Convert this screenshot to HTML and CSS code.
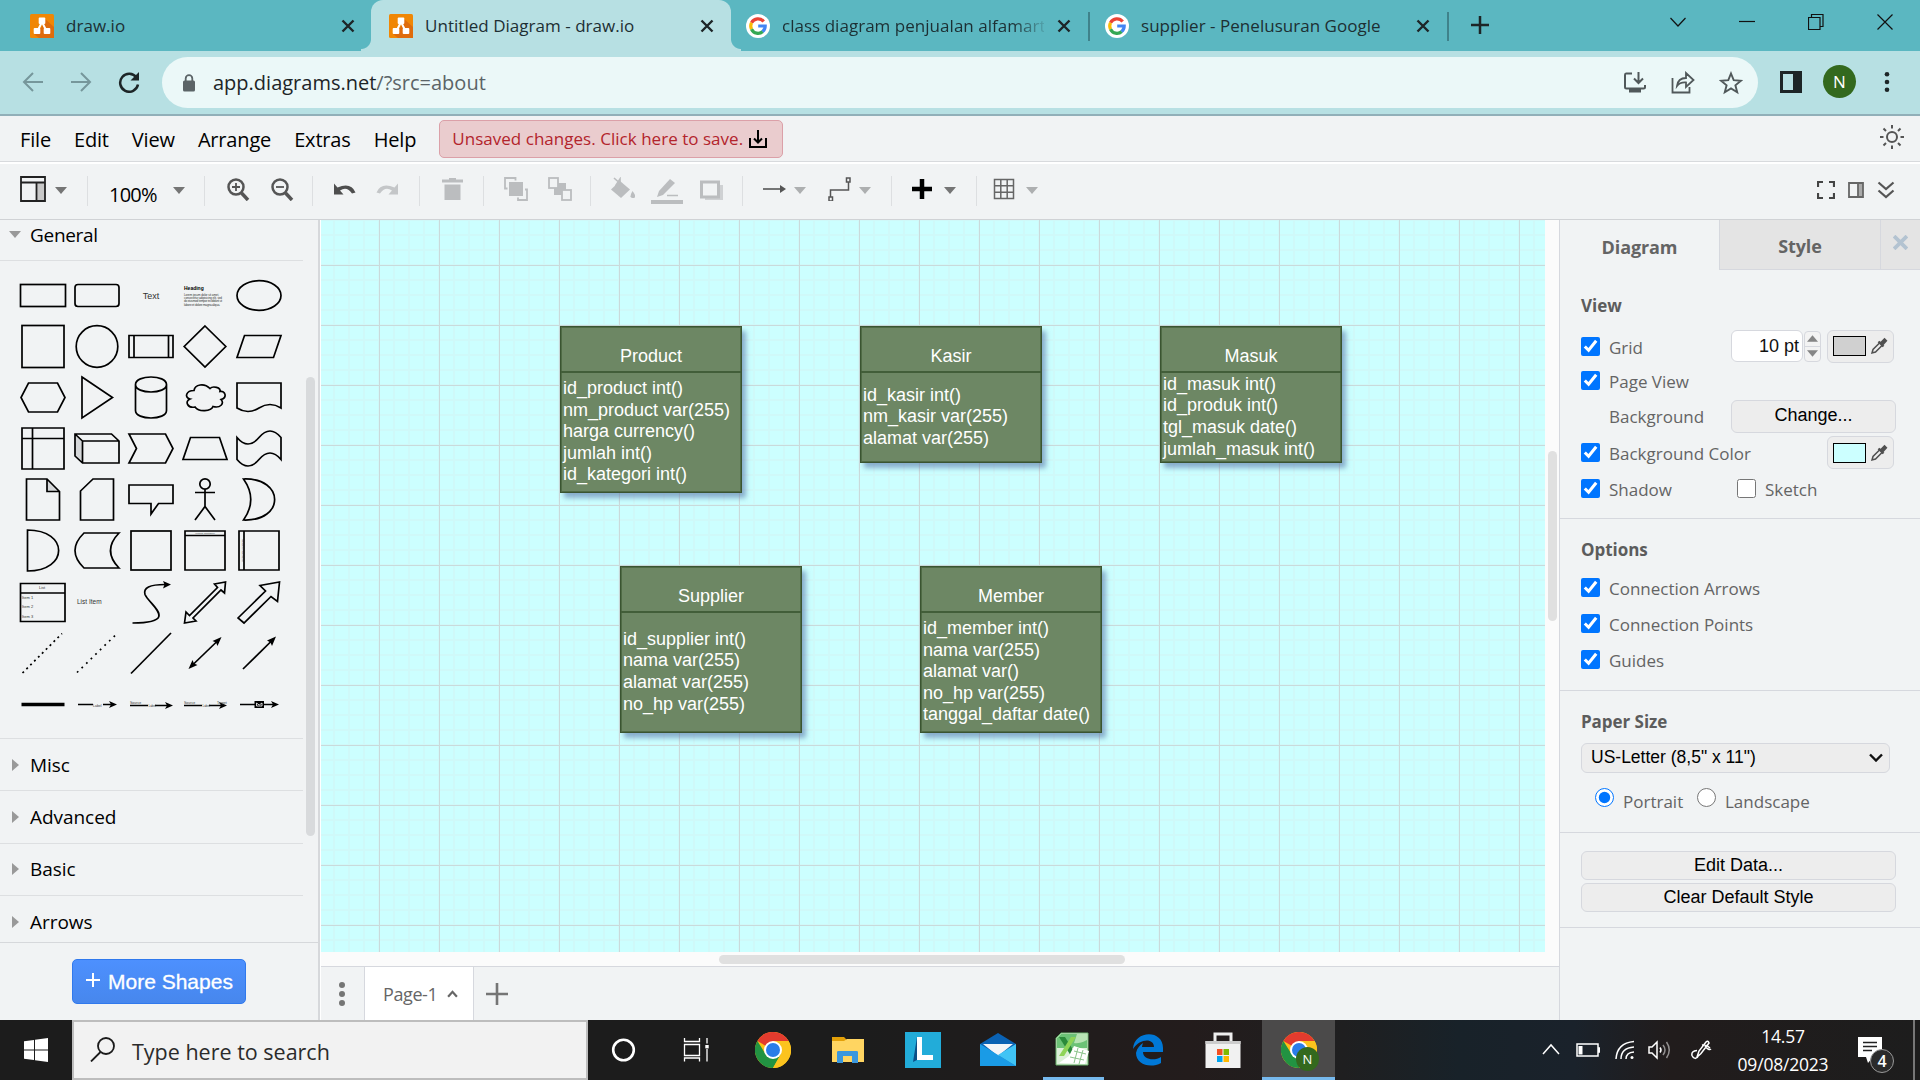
FILE: index.html
```html
<!DOCTYPE html>
<html lang="en">
<head>
<meta charset="utf-8">
<title>Untitled Diagram - draw.io</title>
<link rel="stylesheet" href="styles.css">
</head>
<body>
<svg class="defs" aria-hidden="true">
  <symbol id="drawio" viewBox="0 0 24 24"><rect width="24" height="24" rx="1.5" fill="#f08705"/><path d="M14 4L24 13V24H9L4 20L12 13Z" fill="#df6c0c"/><path d="M12 8L7.500 17M12 8L16.500 17" stroke="#fff" stroke-width="2"/><rect x="8.700" y="3.500" width="6.600" height="6.500" rx="1" fill="#fff"/><rect x="3.700" y="14" width="6.600" height="6" rx="1" fill="#fff"/><rect x="13.700" y="14" width="6.600" height="6" rx="1" fill="#fff"/></symbol>
  <symbol id="google" viewBox="0 0 24 24"><circle cx="12" cy="12" r="12" fill="#fff"/><g fill="none" stroke-width="3.200"><path d="M17.700 7.600A7.300 7.300 0 0 0 5.500 8.800" stroke="#ea4335"/><path d="M5.500 8.800A7.300 7.300 0 0 0 5.500 15.200" stroke="#fbbc05"/><path d="M5.500 15.200A7.300 7.300 0 0 0 16.800 17.500" stroke="#34a853"/><path d="M16.600 17.600A7.300 7.300 0 0 0 19.200 12H12.200" stroke="#4285f4"/></g></symbol>
  <symbol id="x" viewBox="0 0 14 14"><path d="M1.500 1.500L12.500 12.500M12.500 1.500L1.500 12.500" stroke="#1d2527" stroke-width="2.400"/></symbol>
  <symbol id="caret" viewBox="0 0 12 7"><path d="M0 0H12L6 7Z"/></symbol>
  <symbol id="pipette" viewBox="0 0 18 18"><path d="M2 16L3 12.500L10 5.500L12.500 8L5.500 15Z" fill="none" stroke="#505050" stroke-width="1.500"/><path d="M8.500 4.500L13.500 9.500M11 6L14.500 2.500L15.800 3.800L12.500 7.500" fill="none" stroke="#505050" stroke-width="2.400"/></symbol>
  <symbol id="chrome" viewBox="0 0 36 36"><circle cx="18" cy="18" r="18" fill="#fbc116"/><path d="M18 18L2.400 9A18 18 0 0 1 33.600 9Z" fill="#e33b2e"/><path d="M2.400 9A18 18 0 0 0 18 36L25.500 22.500L18 18L10.500 22Z" fill="#229342"/><path d="M18 9H33.600A18 18 0 0 1 18 36L25.800 22.500Z" fill="#fcc31e"/><circle cx="18" cy="18" r="9" fill="#fff"/><circle cx="18" cy="18" r="7" fill="#2b7de9"/></symbol>
</svg>

<header class="tabstrip">
  <div class="tab first"><svg class="fav"><use href="#drawio"/></svg><span class="title">draw.io</span><svg class="tx"><use href="#x"/></svg></div>
  <div class="tab active"><svg class="fav"><use href="#drawio"/></svg><span class="title">Untitled Diagram - draw.io</span><svg class="tx"><use href="#x"/></svg></div>
  <div class="tab lined"><svg class="fav"><use href="#google"/></svg><span class="title fade">class diagram penjualan alfamart</span><svg class="tx"><use href="#x"/></svg></div>
  <div class="tab lined"><svg class="fav"><use href="#google"/></svg><span class="title">supplier - Penelusuran Google</span><svg class="tx"><use href="#x"/></svg></div>
  <svg class="newtab" viewBox="0 0 18 18"><path d="M9 0V18M0 9H18" stroke="#1d2527" stroke-width="2.500"/></svg>
  <div class="winctl">
    <svg viewBox="0 0 16 16"><path d="M.5 4L8 12L15.500 4" /></svg>
    <svg viewBox="0 0 16 16"><path d="M0 7.500H16"/></svg>
    <svg viewBox="0 0 16 16"><path d="M.5 3.500H12V15.500H.5ZM3.500 3.500V.5H15V12.500H12"/></svg>
    <svg viewBox="0 0 16 16"><path d="M.5 .5L15.500 15.500M15.500 .5L.5 15.500"/></svg>
  </div>
</header>

<div class="addressbar">
  <div class="nav">
    <svg viewBox="0 0 22 22"><path d="M21 11H2M11 2L2 11L11 20" fill="none" stroke="#76979b" stroke-width="2"/></svg>
    <svg viewBox="0 0 22 22"><path d="M1 11H20M11 2L20 11L11 20" fill="none" stroke="#76979b" stroke-width="2"/></svg>
    <svg viewBox="0 0 22 22"><path d="M18.500 6.500A9 9 0 1 0 20 13.500" fill="none" stroke="#1d2527" stroke-width="2.500"/><path d="M21 1V9.500H12.500Z" fill="#1d2527"/></svg>
  </div>
  <div class="omnibox">
    <svg class="lock" viewBox="0 0 14 18"><rect x="1" y="6.500" width="12" height="11" rx="1.500" fill="#5b6467"/><path d="M3.700 7V4.500A3.300 3.300 0 0 1 10.300 4.500V7" fill="none" stroke="#5b6467" stroke-width="1.800"/></svg>
    <span class="url">app.diagrams.net<i>/?src=about</i></span>
    <div class="omni-actions">
      <svg viewBox="0 0 24 24"><path d="M9 2.500H3Q2 2.500 2 4V16Q2 17.500 3.500 17.500H20.500Q22 17.500 22 16V14M15.500 1V11M11 7.500L15.500 12L20 7.500" fill="none" stroke="#50585a" stroke-width="2"/><rect x="6" y="17" width="12" height="4.500" fill="#50585a"/></svg>
      <svg viewBox="0 0 24 24"><path d="M1.500 7V21.500H18.500V16M6 15Q7 7 15 7V2L22.500 9L15 16V11.500Q9 11 6 15Z" fill="none" stroke="#50585a" stroke-width="1.800"/></svg>
      <svg viewBox="0 0 24 24"><path d="M12 2.500L14.700 9.200L22 9.700L16.400 14.300L18.200 21.200L12 17.400L5.800 21.200L7.600 14.300L2 9.700L9.300 9.200Z" fill="none" stroke="#50585a" stroke-width="1.900"/></svg>
    </div>
  </div>
  <svg class="panelicon" viewBox="0 0 22 22"><path d="M1.500 1.500H20.500V20.500H1.500Z" fill="none" stroke="#1d2527" stroke-width="3"/><rect x="13" y="1" width="8" height="20" fill="#1d2527"/></svg>
  <span class="avatar">N</span>
  <svg class="kebab" viewBox="0 0 6 20"><circle cx="3" cy="2.300" r="2.300"/><circle cx="3" cy="10" r="2.300"/><circle cx="3" cy="17.700" r="2.300"/></svg>
</div>

<nav class="menubar">
  <span>File</span><span>Edit</span><span>View</span><span>Arrange</span><span>Extras</span><span>Help</span>
  <div class="unsaved"><b>Unsaved changes. Click here to save.</b><svg viewBox="0 0 18 18"><path d="M1 8V17H17V8M9 0V12M5 8.500L9 12.500L13 8.500" fill="none" stroke="#000" stroke-width="2"/></svg></div>
  <svg class="sun" viewBox="0 0 26 26"><g fill="none" stroke="#555" stroke-width="2"><circle cx="13" cy="13" r="5"/><path d="M13 1V4.500M13 21.500V25M1 13H4.500M21.500 13H25M4.500 4.500L7 7M19 19L21.500 21.500M4.500 21.500L7 19M19 7L21.500 4.500"/></g></svg>
</nav>

<div class="toolbar">
  <div class="tg g1"><svg class="i26" viewBox="0 0 26 26"><rect x="17" y="7" width="8" height="18" fill="#c8c8c8"/><path d="M1 1H25V25H1ZM1 6.500H25M16.500 6.500V25" fill="none" stroke="#222" stroke-width="1.800"/></svg><svg class="caret"><use href="#caret"/></svg></div>
  <div class="tg g2"><span class="pct">100%</span><svg class="caret"><use href="#caret"/></svg></div>
  <div class="tg g3">
    <svg viewBox="0 0 24 24"><g fill="none" stroke="#555"><circle cx="10" cy="10" r="7.500" stroke-width="2.500"/><path d="M15.500 16L22 23" stroke-width="3.500"/><path d="M10 6V14M6 10H14" stroke-width="1.800"/></g></svg>
    <svg viewBox="0 0 24 24"><g fill="none" stroke="#555"><circle cx="10" cy="10" r="7.500" stroke-width="2.500"/><path d="M15.500 16L22 23" stroke-width="3.500"/><path d="M6 10H14" stroke-width="1.800"/></g></svg>
  </div>
  <div class="tg g4">
    <svg viewBox="0 0 24 24"><path d="M2 6.500V17.500H11.500L8 13.500Q15 9 20 16.500L23.500 15.500Q19 5 5.500 10.500Z" fill="#4e4e4e"/></svg>
    <svg viewBox="0 0 24 24"><path d="M22 6.500V17.500H12.500L16 13.500Q9 9 4 16.500L.5 15.500Q5 5 18.500 10.500Z" fill="#c4c6c8"/></svg>
  </div>
  <div class="tg g5"><svg viewBox="0 0 24 24"><path d="M1 2.500H8V1H15V2.500H22V5.500H1ZM3.500 7.500H19.500V23H3.500Z" fill="#bbbdbf"/></svg></div>
  <div class="tg g6">
    <svg viewBox="0 0 24 24"><g fill="none" stroke="#bbbdbf" stroke-width="1.800"><path d="M3.500 11.500H1V1H11.500V3.500M21 12.500H23V23H14V20.500"/></g><rect x="5" y="5" width="14" height="14" fill="#bbbdbf"/></svg>
    <svg viewBox="0 0 24 24"><rect x="6" y="6" width="12" height="12" fill="#bbbdbf"/><g fill="#f1f3f4" stroke="#bbbdbf" stroke-width="1.800"><rect x="1" y="1" width="9" height="10"/><rect x="14" y="13" width="9" height="10"/></g></svg>
  </div>
  <div class="tg g7">
    <svg viewBox="0 0 24 24"><path d="M0 12.500L9 4L19 12.500L10 21Z" fill="#bbbdbf"/><path d="M3 1L12 9M4.500 9L9 2V12" fill="none" stroke="#bbbdbf" stroke-width="1.600"/><path d="M21.500 14Q27 21 21.500 21Q17.500 21 21.500 14Z" fill="#bbbdbf"/></svg>
    <svg class="i32" viewBox="0 0 32 28"><path d="M6 20L8 14L19 2L24 6L12 18Z" fill="#bbbdbf"/><path d="M16 18.500H27" stroke="#bbbdbf" stroke-width="1.500"/><rect y="23" width="32" height="4" fill="#bbbdbf"/></svg>
    <svg viewBox="0 0 24 24"><path d="M6 8H24V23H6Z" fill="#cfd1d3"/><rect x="2.500" y="5" width="17" height="15" fill="#f1f3f4" stroke="#bbbdbf" stroke-width="3"/></svg>
  </div>
  <div class="tg g8">
    <svg viewBox="0 0 24 24"><path d="M0 12H20" stroke="#555" stroke-width="1.600"/><path d="M17 8L23 12L17 16Z" fill="#555"/></svg><svg class="caret dim"><use href="#caret"/></svg>
    <svg class="way" viewBox="0 0 24 24"><path d="M2.500 20V13H20.500V5M1 20H4.500V24H1ZM18.500 1H22V5H18.500Z" fill="none" stroke="#555" stroke-width="1.500"/></svg><svg class="caret dim"><use href="#caret"/></svg>
  </div>
  <div class="tg g9"><svg viewBox="0 0 24 24"><path d="M12 2V22M2 12H22" stroke="#000" stroke-width="4.500"/></svg><svg class="caret"><use href="#caret"/></svg></div>
  <div class="tg g10"><svg viewBox="0 0 24 24"><path d="M2.500 2.500H21.500V21.500H2.500ZM2.500 8.800H21.500M2.500 15.200H21.500M8.800 2.500V21.500M15.200 2.500V21.500" fill="none" stroke="#666" stroke-width="1.500"/></svg><svg class="caret dim"><use href="#caret"/></svg></div>
  <div class="view-ctl">
    <svg viewBox="0 0 18 18"><path d="M1 6V1H6M12 1H17V6M17 12V17H12M6 17H1V12" fill="none" stroke="#444" stroke-width="2.200"/></svg>
    <svg viewBox="0 0 18 18"><path d="M11 2H16V16H11Z" fill="#aaa"/><path d="M2 2H16V16H2ZM11 2V16" fill="none" stroke="#666" stroke-width="1.800"/></svg>
    <svg viewBox="0 0 18 18"><path d="M1.500 1.500L9 8L16.500 1.500M1.500 9.500L9 16L16.500 9.500" fill="none" stroke="#555" stroke-width="2.200"/></svg>
  </div>
</div>

<main class="workspace">
  <aside class="sidebar">
    <div class="palette">
      <div class="sections">
        <div class="sec general"><svg class="caret fade-caret"><use href="#caret"/></svg>General</div>
        <div class="shapes">
          <svg viewBox="-27 -25.500 54 51"><rect x="-22.500" y="-11" width="45" height="22"/></svg>
          <svg viewBox="-27 -25.500 54 51"><rect x="-22" y="-11" width="44" height="22" rx="3"/></svg>
          <svg viewBox="-27 -25.500 54 51"><text x="0" y="3.500" font-size="9" text-anchor="middle">Text</text></svg>
          <svg viewBox="-27 -25.500 54 51"><g font-size="3"><text class="hd" x="-21" y="-6">Heading</text><text x="-21" y="0" textLength="35">Lorem ipsum dolor sit amet,</text><text x="-21" y="3.300" textLength="38">consectetur adipisicing elit, sed</text><text x="-21" y="6.600" textLength="38">do eiusmod tempor incididunt ut</text><text x="-21" y="10.500" textLength="36">labore et dolore magna aliqua.</text></g></svg>
          <svg viewBox="-27 -25.500 54 51"><ellipse rx="22" ry="14.800"/></svg>

          <svg viewBox="-27 -25.500 54 51"><rect x="-21" y="-21" width="42" height="42"/></svg>
          <svg viewBox="-27 -25.500 54 51"><circle r="20.800"/></svg>
          <svg viewBox="-27 -25.500 54 51"><path d="M-22 -11H22V11H-22ZM-17 -11V11M17.500 -11V11"/></svg>
          <svg viewBox="-27 -25.500 54 51"><path d="M0 -20.500L20.800 0L0 20.500L-20.800 0Z"/></svg>
          <svg viewBox="-27 -25.500 54 51"><path d="M-14.500 -11H22L14.500 11H-22Z"/></svg>

          <svg viewBox="-27 -25.500 54 51"><path d="M-14.500 -14.500H14.500L22 0L14.500 14.500H-14.500L-22 0Z"/></svg>
          <svg viewBox="-27 -25.500 54 51"><path d="M-15 -20.500L15.500 0L-15 20.500Z"/></svg>
          <svg viewBox="-27 -25.500 54 51"><path d="M-15.500 -13V13C-15.500 23 15.500 23 15.500 13V-13C15.500 -23 -15.500 -23 -15.500 -13C-15.500 -3 15.500 -3 15.500 -13"/></svg>
          <svg viewBox="-27 -25.500 54 51"><path d="M-11 -7C-19 -7 -21 0 -15 1.500C-21 4 -17 11 -10 9.500C-6 15 6 14 8 9C15 11 20 6 16 2C23 0 20 -7 15 -6C16 -10 8 -12 5 -9C-1 -15 -10 -13 -11 -7Z"/></svg>
          <svg viewBox="-27 -25.500 54 51"><path d="M-22 10.500V-14.500H22V10.500Q11 3.500 0 10.500T-22 10.500Z"/></svg>

          <svg viewBox="-27 -25.500 54 51"><path d="M-21 -20.500H21V20.500H-21ZM-21 -10H21M-10.500 -20.500V20.500"/></svg>
          <svg viewBox="-27 -25.500 54 51"><path class="shade" d="M-22 -14.500L-14.500 -7.500V14.500L-22 7.500Z"/><path d="M-22 -14.500H14.500L22 -7.500V14.500H-14.500L-22 7.500ZM-22 -14.500L-14.500 -7.500H22M-14.500 -7.500V14.500"/></svg>
          <svg viewBox="-27 -25.500 54 51"><path d="M-22 -14.500H14.500L22 0L14.500 14.500H-22L-14.500 0Z"/></svg>
          <svg viewBox="-27 -25.500 54 51"><path d="M-14.500 -11H14.500L22 11H-22Z"/></svg>
          <svg viewBox="-27 -25.500 54 51"><path d="M-22 -11Q-11 2 0 -11T22 -11V11Q11 -2 0 11T-22 11Z"/></svg>

          <svg viewBox="-27 -25.500 54 51"><path class="shade" d="M4 -20.500V-8H16.500Z"/><path d="M-16.500 -20.500H4L16.500 -8V20.500H-16.500ZM4 -20.500V-8H16.500"/></svg>
          <svg viewBox="-27 -25.500 54 51"><path d="M-4 -20.500H16.500V20.500H-16.500V-8.500Z"/></svg>
          <svg viewBox="-27 -25.500 54 51"><path d="M-22 -14.500H22V4H7.500L0 14.500V4H-22Z"/></svg>
          <svg viewBox="-27 -25.500 54 51"><circle cy="-15.500" r="5.200"/><path d="M0 -10.300V7M-10 -7H10M-10 20.500L0 7L10 20.500"/></svg>
          <svg viewBox="-27 -25.500 54 51"><path d="M-15.500 -20.500C26 -22 26 22 -15.500 20.500Q-1 0 -15.500 -20.500Z"/></svg>

          <svg viewBox="-27 -25.500 54 51"><path d="M-15.500 -20.500C26 -20.500 26 20.500 -15.500 20.500Z"/></svg>
          <svg viewBox="-27 -25.500 54 51"><path d="M-13 -17.500H22Q5 0 22 17.500H-13Q-31 0 -13 -17.500Z"/></svg>
          <svg viewBox="-27 -25.500 54 51"><rect x="-20" y="-19.500" width="40" height="39"/></svg>
          <svg viewBox="-27 -25.500 54 51"><path d="M-20 -19.500H20V19.500H-20ZM-20 -15H20"/><text x="-10" y="-16.200" font-size="2.500">Vertical Container</text></svg>
          <svg viewBox="-27 -25.500 54 51"><path d="M-20 -19.500H20V19.500H-20ZM-15 -19.500V19.500"/><text transform="translate(-16.500 11) rotate(-90)" font-size="2.500">Horizontal Container</text></svg>

          <svg viewBox="-27 -25.500 54 51"><path d="M-22.500 -19H22V19H-22.500ZM-22.500 -9.500H22"/><g font-size="4"><text x="-4" y="-14">List</text><text x="-21" y="-4">Item 1</text><text x="-21" y="5">Item 2</text><text x="-21" y="15">Item 3</text></g></svg>
          <svg viewBox="-27 -25.500 54 51"><text x="-20" y="1.500" font-size="6.500">List Item</text></svg>
          <svg viewBox="-27 -25.500 54 51"><path d="M-18.500 20.500C30 20.500 -2 2 -6 -8Q-9 -18 14 -18"/><path class="ink" d="M20 -18L12 -21.500L13.500 -18L12 -14Z"/></svg>
          <svg viewBox="-27 -25.500 54 51"><path d="M-20.500 20.500L-19 9.500L-15.500 13L12.500 -15L9.500 -18.500L20.500 -20.500L19.500 -9.500L16 -12.500L-12 15.500L-9 18.500Z"/></svg>
          <svg viewBox="-27 -25.500 54 51"><path d="M-21 15.500L6.500 -11.500L1 -17L20.500 -20.500L18.500 -1L12 -6L-15 20.500Z"/></svg>

          <svg viewBox="-27 -25.500 54 51"><path stroke-dasharray="2 3.500" d="M-20.500 19.500L19 -20"/></svg>
          <svg viewBox="-27 -25.500 54 51"><path stroke-dasharray="1.800 4.600" d="M-20 19L18 -18"/></svg>
          <svg viewBox="-27 -25.500 54 51"><path d="M-20 20L20 -20.500"/></svg>
          <svg viewBox="-27 -25.500 54 51"><path d="M-14 13L14 -14"/><path class="ink" d="M16.500 -16.500L7.500 -12.500L11 -11L12.500 -7.500ZM-16.500 15.500L-7.500 11.500L-11 10L-12.500 6.500Z"/></svg>
          <svg viewBox="-27 -25.500 54 51"><path d="M-16 15.500L14 -14"/><path class="ink" d="M17 -17L8 -13L11.500 -11L13 -7.500Z"/></svg>

          <svg viewBox="-27 -25.500 54 51"><path class="thick" d="M-21.500 0H21.500"/></svg>
          <svg viewBox="-27 -25.500 54 51"><path d="M-19 0H-4M6 0H15"/><path class="ink" d="M20 0L12 -3.500L14 0L12 3.500Z"/><text x="-4" y="2" font-size="3.500">Label</text></svg>
          <svg viewBox="-27 -25.500 54 51"><path d="M-21 1H-3M4 1H17"/><path class="ink" d="M22 1L14 -2.500L16 1L14 4.500Z"/><text x="-21" y="-.5" font-size="3.500">Source</text><text x="-2.500" y="2.500" font-size="3">Label</text></svg>
          <svg viewBox="-27 -25.500 54 51"><path d="M-21 1H-3M4 1H17"/><path class="ink" d="M22 1L14 -2.500L16 1L14 4.500Z"/><text x="-21" y="-.5" font-size="3.500">Source</text><text x="-2.500" y="2.500" font-size="3">Label</text><text x="12" y="-.5" font-size="3.500">Target</text></svg>
          <svg viewBox="-27 -25.500 54 51"><path d="M-19 0H15"/><path class="ink" d="M20 0L12 -3.500L14 0L12 3.500ZM-4.500 -3.500H5V3.500H-4.500Z"/><path d="M-2.500 -1.500L.2 .5L3 -1.500V1.500H-2.500Z" stroke="#fff" stroke-width=".8"/></svg>
        </div>
        <div class="sec"><svg class="tri" viewBox="0 0 7 12"><path d="M0 0L7 6L0 12Z"/></svg>Misc</div>
        <div class="sec"><svg class="tri" viewBox="0 0 7 12"><path d="M0 0L7 6L0 12Z"/></svg>Advanced</div>
        <div class="sec"><svg class="tri" viewBox="0 0 7 12"><path d="M0 0L7 6L0 12Z"/></svg>Basic</div>
        <div class="sec"><svg class="tri" viewBox="0 0 7 12"><path d="M0 0L7 6L0 12Z"/></svg>Arrows</div>
      </div>
      <div class="vthumb"></div>
    </div>
    <div class="more"><button><svg viewBox="0 0 14 14"><path d="M7 0V14M0 7H14" stroke="#fff" stroke-width="2"/></svg>More Shapes</button></div>
  </aside>

  <section class="editor">
    <div class="stage">
      <div class="canvas">
        <div class="entity e-product tall"><h3>Product</h3><p>id_product int()<br>nm_product var(255)<br>harga currency()<br>jumlah int()<br>id_kategori int()</p></div>
        <div class="entity e-kasir"><h3>Kasir</h3><p>id_kasir int()<br>nm_kasir var(255)<br>alamat var(255)</p></div>
        <div class="entity e-masuk"><h3>Masuk</h3><p>id_masuk int()<br>id_produk int()<br>tgl_masuk date()<br>jumlah_masuk int()</p></div>
        <div class="entity e-supplier tall"><h3>Supplier</h3><p>id_supplier int()<br>nama var(255)<br>alamat var(255)<br>no_hp var(255)</p></div>
        <div class="entity e-member tall"><h3>Member</h3><p>id_member int()<br>nama var(255)<br>alamat var()<br>no_hp var(255)<br>tanggal_daftar date()</p></div>
      </div>
      <div class="vbar"><div></div></div>
      <div class="hbar"><div></div></div>
    </div>
    <div class="pages">
      <svg class="dots" viewBox="0 0 6 24"><circle cx="3" cy="3" r="3"/><circle cx="3" cy="12" r="3"/><circle cx="3" cy="21" r="3"/></svg>
      <div class="page">Page-1<svg viewBox="0 0 10 7"><path d="M1 6L5 1.500L9 6" fill="none" stroke="#666" stroke-width="2"/></svg></div>
      <svg class="addpage" viewBox="0 0 22 22"><path d="M11 0V22M0 11H22" stroke="#757575" stroke-width="2.600"/></svg>
    </div>
  </section>

  <aside class="format">
    <div class="ftabs"><div class="ft on">Diagram</div><div class="ft">Style</div><div class="fx"><svg viewBox="0 0 14 14"><path d="M1 1L13 13M13 1L1 13" stroke="#b3c3d1" stroke-width="3.500"/></svg></div></div>
    <div class="block view">
      <h4>View</h4>
      <div class="row r1"><input type="checkbox" checked><label>Grid</label><div class="num">10 pt</div><div class="spin"><svg viewBox="0 0 12 7"><path d="M0 7H12L6 0Z"/></svg><svg viewBox="0 0 12 7"><path d="M0 0H12L6 7Z"/></svg></div><div class="color"><i class="grey"></i><svg><use href="#pipette"/></svg></div></div>
      <div class="row r2"><input type="checkbox" checked><label>Page View</label></div>
      <div class="row r3"><label>Background</label><div class="btn change">Change...</div></div>
      <div class="row r4"><input type="checkbox" checked><label>Background Color</label><div class="color"><i class="cyan"></i><svg><use href="#pipette"/></svg></div></div>
      <div class="row r5"><input type="checkbox" checked><label class="shadow">Shadow</label><input type="checkbox"><label>Sketch</label></div>
    </div>
    <div class="block options">
      <h4>Options</h4>
      <div class="row"><input type="checkbox" checked><label>Connection Arrows</label></div>
      <div class="row"><input type="checkbox" checked><label>Connection Points</label></div>
      <div class="row"><input type="checkbox" checked><label>Guides</label></div>
    </div>
    <div class="block paper">
      <h4>Paper Size</h4>
      <div class="select">US-Letter (8,5" x 11")<svg viewBox="0 0 14 9"><path d="M1 1.500L7 7.500L13 1.500" fill="none" stroke="#111" stroke-width="2.400"/></svg></div>
      <div class="radios"><input type="radio" name="o" checked><label class="portrait">Portrait</label><input type="radio" name="o"><label>Landscape</label></div>
    </div>
    <div class="block actions"><div class="btn">Edit Data...</div><div class="btn">Clear Default Style</div></div>
  </aside>
</main>

<footer class="taskbar">
  <div class="start"><svg viewBox="0 0 24 24"><path d="M0 3.300L10 2V11.400H0ZM11 1.800L24 0V11.400H11ZM0 12.500H10V22L0 20.700ZM11 12.500H24V24L11 22.200Z" fill="#fff"/></svg></div>
  <div class="search"><svg viewBox="0 0 25 25"><circle cx="16" cy="9" r="8" fill="none" stroke="#1b1b1b" stroke-width="1.800"/><path d="M10.500 15L1 24.500" stroke="#1b1b1b" stroke-width="1.800"/></svg>Type here to search</div>
  <div class="apps">
    <div><svg viewBox="0 0 36 36"><circle cx="18.500" cy="18" r="10.300" fill="none" stroke="#fff" stroke-width="2.600"/></svg></div>
    <div class="tv"><svg viewBox="0 0 36 36"><path d="M6.500 6V9.500H21.500V6M6.500 12.500H21.500V23.500H6.500ZM6.500 29.500V26H21.500V29.500M29 6V11.500M29 17V29.500" fill="none" stroke="#fff" stroke-width="1.300"/><rect x="27.300" y="13" width="3.400" height="3.400" fill="#fff"/></svg></div>
    <div><svg><use href="#chrome"/></svg></div>
    <div><svg viewBox="0 0 36 36"><path d="M2 5H14L17 8H34V12H2Z" fill="#e3a008"/><path d="M2 9H14L17 7H34V30H2Z" fill="#ffd561"/><path d="M7 31V20Q7 19 8.500 19H26.500Q28 19 28 20V31H22V24H13V31Z" fill="#3b97dd"/></svg></div>
    <div><svg viewBox="0 0 36 36"><rect width="36" height="36" fill="#22acd9"/><path d="M8 30L12 5L16 10V26Z" fill="#0b4f86"/><path d="M12 5H17V23H28V28H12Z" fill="#fff"/></svg></div>
    <div><svg viewBox="0 0 36 36"><path d="M0 12L18 1L36 12V34H0Z" fill="#0a62b4"/><path d="M3 12H33L18 24Z" fill="#f3f5f8"/><path d="M0 12L36 34H0Z" fill="#1a9be6"/><path d="M36 12L18 23L36 34Z" fill="#40c4f5"/></svg></div>
    <div class="run"><svg viewBox="0 0 36 36"><path d="M7 1H34V33H2V6Z" fill="#dcf0d8" stroke="#69b26a"/><path d="M7 2H33V16H3V6Z" fill="#6cc276"/><path d="M33 2V8Q25 12 20 11L23 2Z" fill="#b8e3b4"/><path d="M5 5H11L23 24H17Z" fill="#2b8a3a"/><path d="M17 5H22L10 24H5Z" fill="#8fd457"/><path d="M20 14L35 19L31 32L5 31L15 24Z" fill="#fff"/><path d="M20 19L32 22M16 25L30 28M24 16L20 31M29 18L25 32" stroke="#8bc48b"/></svg></div>
    <div><svg viewBox="0 0 36 36"><path d="M3 17C4 -2 33 -3 33 16V20H13C13 28 25 29 31 25V31C20 37 6 32 6 21C7 16 10 13 13 11Q12 14 12 15H24C24 6 10 6 3 17Z" fill="#0078d7"/></svg></div>
    <div><svg viewBox="0 0 36 36"><path d="M10 12V2H26V12" fill="none" stroke="#eee" stroke-width="3"/><path d="M.5 9H35.500V36H.5Z" fill="#f1f1f1"/><path d="M.5 9H35.500V12H.5Z" fill="#ccc"/><path fill="#f25022" d="M12 17h5.500v6H12z"/><path fill="#7fba00" d="M18.500 17H24v6h-5.500z"/><path fill="#00a4ef" d="M12 24h5.500v6H12z"/><path fill="#ffb900" d="M18.500 24H24v6h-5.500z"/></svg></div>
    <div class="cur"><svg><use href="#chrome"/></svg><span class="badge">N</span></div>
  </div>
  <div class="tray">
    <svg class="t1" viewBox="0 0 18 20"><path d="M1 14L9 5L17 14"/></svg>
    <svg class="t2" viewBox="0 0 24 20"><path d="M1 4H22V16H1ZM22 8H23.500V12H22"/><rect x="2.500" y="6" width="4" height="8.500" fill="#fff" stroke="none"/></svg>
    <svg class="t3" viewBox="0 0 19 20"><path d="M1 19Q2 3 19 1.500M6 19Q6 8 19 7M11 19Q11 12.500 19 12"/><circle cx="17" cy="17.500" r="1.500" fill="#fff" stroke="none"/></svg>
    <svg class="t4" viewBox="0 0 23 20"><path d="M1 7H4L9 2V18L4 13H1Z"/><path d="M12 7.500Q14 10 12 12.500"/><path d="M15 5Q19 10 15 15M18.500 2Q24 10 18.500 18" opacity=".5"/></svg>
    <svg class="t5" viewBox="0 0 21 20"><path d="M6 17L8 11L15 2Q17 0 18 3L10 13.500ZM6 10.500Q0 11 1 15.500Q3 20 7 17M14 6Q18 11 20 9M11 5Q15 4 19 8"/></svg>
    <div class="clock"><span>14.57</span><span>09/08/2023</span></div>
    <div class="notif"><svg viewBox="0 0 24 26"><path d="M0 0H24V20H15L10 26L8 20H0Z" fill="#fff" stroke="none"/><path d="M5 5.500H19M5 9.500H19M5 13.500H14" stroke="#222" stroke-width="1.400"/></svg><span>4</span></div>
    <div class="desk"></div>
  </div>
</footer>
</body>
</html>
```
FILE: styles.css
```css
* { box-sizing: border-box; }
body { margin: 0; width: 1920px; height: 1080px; overflow: hidden; display: flex; flex-direction: column; background: #f1f3f4; font-family: "Open Sans", "Noto Sans", sans-serif; font-size: 17px; letter-spacing: 0; }
svg { display: block; flex: none; }
.defs { position: absolute; width: 0; height: 0; }

/* browser tabs */
.tabstrip { height: 51px; flex: none; display: flex; align-items: flex-start; background: #5bb7c1; color: #1d2f33; }
.tab { height: 51px; width: 359px; display: flex; align-items: center; padding-left: 16px; position: relative; }
.tab.first { width: 371px; padding-left: 30px; }
.tab.active { width: 360px; padding-left: 18px; background: #b7e0e3; border-radius: 12px 12px 0 0; }
.tab.active::before, .tab.active::after { content: ""; position: absolute; bottom: 0; width: 10px; height: 12px; }
.tab.active::before { left: -10px; background: radial-gradient(circle at 0 0, #5bb7c1 9.500px, #b7e0e3 10.500px); }
.tab.active::after { right: -10px; background: radial-gradient(circle at 100% 0, #5bb7c1 9.500px, #b7e0e3 10.500px); }
.tab.lined { padding-left: 15px; }
.tab.lined::after { content: ""; position: absolute; right: 0; top: 12px; height: 29px; width: 2px; background: #3f828b; }
.fav { width: 24px; height: 24px; margin-right: 12px; }
.title { width: 262px; white-space: nowrap; overflow: hidden; letter-spacing: .03px; }
.title.fade { -webkit-mask-image: linear-gradient(90deg, #000 88%, transparent 102%); mask-image: linear-gradient(90deg, #000 88%, transparent 102%); }
.tx { width: 14px; height: 14px; margin-left: 13px; }
.newtab { width: 18px; height: 18px; margin: 16px 0 0 22px; }
.winctl { display: flex; gap: 53px; margin: 14px 27px 0 auto; }
.winctl svg { width: 16px; height: 16px; fill: none; stroke: #111; stroke-width: 1.200; }

/* address bar */
.addressbar { height: 65px; flex: none; display: flex; align-items: center; padding-bottom: 2px; background: #b7e0e3; border-bottom: 2px solid #91afb8; }
.nav { display: flex; gap: 26px; padding-left: 22px; width: 162px; }
.nav svg { width: 22px; height: 22px; }
.omnibox { width: 1596px; height: 51px; border-radius: 26px; background: #ebf8f8; display: flex; align-items: center; padding-left: 20px; margin-top: 2px; }
.lock { width: 14px; height: 18px; }
.url { margin-left: 17px; font-size: 20px; color: #1d2527; }
.url i { font-style: normal; color: #5b6467; }
.omni-actions { margin-left: auto; margin-right: 15px; display: flex; gap: 24px; }
.omni-actions svg { width: 24px; height: 24px; }
.panelicon { width: 22px; height: 22px; margin-left: 22px; }
.avatar { width: 33px; height: 33px; margin-left: 21px; border-radius: 50%; background: #33691e; color: #fff; font-size: 17px; line-height: 33px; text-align: center; }
.kebab { width: 6px; height: 20px; margin-left: 28px; fill: #1d2527; }

/* menu */
.menubar { height: 46px; flex: none; display: flex; align-items: center; padding-left: 20px; border-bottom: 1px solid #d8dadd; font-size: 20px; color: #000; letter-spacing: -.17px; }
.menubar > span { margin-right: 23px; padding-top: 2px; }
.unsaved { width: 344px; height: 38px; display: flex; align-items: center; padding-left: 12px; gap: 8px; background: #eaccce; border: 1px solid #dba0a8; border-radius: 5px; color: #b3242c; font-size: 17px; letter-spacing: .03px; }
.unsaved b { font-weight: 400; width: 289px; white-space: nowrap; }
.unsaved svg { width: 18px; height: 18px; }
.sun { width: 26px; height: 26px; margin: -4px 15px 0 auto; }

/* toolbar */
.toolbar { height: 58px; flex: none; display: flex; align-items: center; padding-bottom: 2px; border-top: 2px solid #fff; border-bottom: 1px solid #d0d2d5; }
.tg { height: 30px; display: flex; align-items: center; border-right: 1px solid #dddfe1; }
.tg svg { width: 24px; height: 24px; margin-top: -3px; }
.tg .i26 { width: 26px; height: 26px; }
.tg .i32 { width: 32px; height: 28px; margin-top: 1px; }
.tg .caret { width: 12px; height: 7px; fill: #757575; margin-top: 0; }
.tg .caret.dim { fill: #adafb0; }
.g1 { width: 88px; padding-left: 20px; gap: 9px; }
.g2 { width: 117px; padding-left: 21px; }
.pct { width: 64px; font-size: 20px; letter-spacing: -.8px; padding-top: 7px; }
.g3 { width: 108px; padding-left: 21px; gap: 20px; }
.g4 { width: 107px; padding-left: 19px; gap: 20px; }
.g5 { width: 64px; padding-left: 21px; }
.g6 { width: 107px; padding-left: 20px; gap: 20px; }
.g7 { width: 152px; padding-left: 20px; gap: 16px; }
.g8 { width: 149px; padding-left: 20px; gap: 7px; }
.g8 .way { margin-left: 15px; }
.g9 { width: 85px; padding-left: 18px; gap: 10px; }
.g10 { padding-left: 15px; gap: 10px; border: 0; }
.view-ctl { margin-left: auto; margin-right: 25px; display: flex; gap: 12px; }
.view-ctl svg { width: 18px; height: 18px; margin-top: -2px; }

/* workspace */
.workspace { height: 800px; flex: none; display: flex; }
.sidebar { width: 321px; display: flex; flex-direction: column; border-right: 1px solid #fff; box-shadow: inset -2px 0 #d6d8db; }
.palette { height: 722px; display: flex; overflow: hidden; }
.sections { width: 303px; }
.sec { height: 52.300px; display: flex; align-items: center; gap: 11px; padding-left: 12px; font-size: 19px; font-weight: 500; letter-spacing: -.05px; color: #000; border-top: 1px solid #dddfe1; }
.sec.general { height: 41px; padding: 0 0 11px 9px; gap: 9px; border-top: 0; border-bottom: 1px solid #dddfe1; letter-spacing: -.3px; }
.fade-caret { width: 12px; height: 7px; fill: #999; }
.tri { width: 7px; height: 12px; fill: #999; }
.shapes { height: 477px; padding: 9px 0 0 15.500px; display: grid; grid-template-columns: repeat(5, 54px); grid-auto-rows: 51.100px; }
.shapes svg { width: 54px; height: 51px; fill: none; stroke: #000; stroke-width: 1.700; }
.shapes text { fill: #333; stroke: none; letter-spacing: 0; font-family: "Liberation Sans", sans-serif; }
.shapes .hd { font-size: 5px; font-weight: 700; fill: #000; }
.shapes .shade { fill: #d5d7d9; stroke: none; }
.shapes .ink { fill: #000; stroke: none; }
.shapes .thick { stroke-width: 3.500; }
.vthumb { width: 9px; height: 459px; margin: 157px 0 0 3px; border-radius: 5px; background: #d8dadc; }
.more { height: 78px; border-top: 1px solid #d6d8db; width: 318px; padding: 16px 0 0 72px; }
.more button { width: 174px; height: 45px; border: 1px solid #3079ed; border-radius: 5px; background: linear-gradient(#4d90fe, #4787ed); color: #fff; font: 21px "Liberation Sans", sans-serif; -webkit-text-stroke: .3px #fff; display: flex; align-items: center; padding: 1px 0 0 13px; gap: 8px; white-space: nowrap; }
.more button svg { width: 14px; height: 14px; margin-top: -4px; }

.editor { width: 1238px; display: flex; flex-direction: column; }
.stage { height: 746px; display: grid; grid-template-columns: 1224px 14px; grid-template-rows: 732px 14px; background: #fbfbfb; }
.canvas { position: relative; overflow: hidden; background-color: #cff;
  background-image: linear-gradient(90deg, #c9dadb 1px, transparent 1px), linear-gradient(#c9dadb 1px, transparent 1px), linear-gradient(90deg, #cff9f9 2px, transparent 2px), linear-gradient(#cff9f9 2px, transparent 2px);
  background-size: 60px 60px, 60px 60px, 15px 15px, 15px 15px; background-position: -2px 0, 0 45px, -3px 0, 0 -1px; }
.vbar { padding: 231px 0 0 3px; }
.vbar div { width: 9px; height: 170px; border-radius: 5px; background: #e0e0e0; }
.hbar { padding: 3px 0 0 398px; }
.hbar div { width: 406px; height: 9px; border-radius: 5px; background: #e0e0e0; }

/* entities sit freely on the diagram canvas */
.entity { position: absolute; width: 182px; height: 137px; background: #6d8764; border: 1px solid #3a5431; box-shadow: inset 0 0 0 1px #4f6b45, 4px 5px 5px rgba(90, 120, 170, .6); color: #fff; font-family: "Liberation Sans", Arial, sans-serif; font-size: 18px; line-height: 21.600px; letter-spacing: 0; display: flex; flex-direction: column; }
.entity.tall { height: 167px; }
.entity h3 { margin: 0; height: 46px; flex: none; padding-top: 19px; text-align: center; font-size: 18px; font-weight: 400; border-bottom: 2px solid #425e39; }
.entity p { margin: 0; flex: 1; display: grid; align-content: center; padding: 0 0 1px 2px; white-space: nowrap; }
.e-product { left: 239px; top: 106px; }
.e-kasir { left: 539px; top: 106px; }
.e-masuk { left: 839px; top: 106px; }
.e-supplier { left: 299px; top: 346px; }
.e-member { left: 599px; top: 346px; }

.pages { height: 54px; border-top: 1px solid #d6d8de; display: flex; align-items: center; }
.dots { width: 6px; height: 24px; margin: 0 19px 0 18px; fill: #757575; }
.page { width: 110px; height: 53px; display: flex; align-items: center; gap: 10px; padding-left: 18px; padding-top: 1px; background: #fff; border: solid #d6d8de; border-width: 0 1px; color: #666; font-size: 18px; letter-spacing: -.4px; font-weight: 500; }
.page svg { width: 11px; height: 8px; }
.addpage { width: 22px; height: 22px; margin-left: 12px; }

/* format panel */
.format { width: 361px; border-left: 1px solid #d6d8de; color: #646464; font-size: 18px; letter-spacing: -.2px; }
.ftabs { height: 50px; display: flex; font-weight: 700; font-size: 18px; letter-spacing: -.1px; }
.ft { width: 162px; text-align: center; line-height: 52px; background: #e4e4e4; border: 1px solid #d6d8de; border-top: 0; }
.ft.on { width: 159px; background: none; border: 0; line-height: 54px; }
.fx { width: 39px; background: #e4e4e4; border-bottom: 1px solid #d6d8de; padding: 15px 0 0 12px; }
.fx svg { width: 15px; height: 15px; }
.block { border-bottom: 1px solid #d6d8de; padding-left: 21px; }
h4 { margin: 0; font-size: 17px; line-height: 24px; letter-spacing: -.05px; color: #5c5c5c; }
.row { display: flex; align-items: center; }
input { width: 19px; height: 19px; margin: 0 9px 0 0; flex: none; }
label { padding-top: 3px; font-size: 17px; line-height: 24px; white-space: nowrap; letter-spacing: 0; }
.view { height: 249px; padding-top: 24px; }
.r1 { height: 42px; margin-top: 7px; }
.r1 label { width: 122px; }
.num { width: 72px; height: 32px; border: 1px solid #d6d8de; border-radius: 6px; background: #fff; color: #111; font: 18px/30px "Liberation Sans", sans-serif; letter-spacing: 0; text-align: right; padding-right: 3px; }
.spin { width: 17px; height: 31px; margin-left: 1px; border: 1px solid #d6d8de; border-radius: 4px; background: linear-gradient(#d6d8de, #d6d8de) 0 50% / 100% 1px no-repeat #f3f3f3; display: flex; flex-direction: column; align-items: center; justify-content: space-around; }
.spin svg { width: 11px; height: 7px; fill: #858585; }
.color { width: 67px; height: 33px; margin-left: auto; border: 1px solid #d6d8de; border-radius: 6px; background: #ededed; display: flex; align-items: center; padding-left: 5px; gap: 4px; }
.r1 .color { margin-left: 6px; }
.r4 .color { margin-right: 26px; }
.color i { width: 33px; height: 20px; border: 1px solid #000; }
.color svg { width: 18px; height: 18px; }
.grey { background: #d0d0d0; }
.cyan { background: #cff; }
.r2 { height: 26px; }
.r3 { height: 47px; padding-left: 28px; margin-top: -1px; }
.r3 label { width: 122px; }
.btn { border: 1px solid #d6d8de; border-radius: 6px; background: #ededed; color: #000; font: 18px/26px "Liberation Sans", sans-serif; text-align: center; letter-spacing: 0; }
.change { width: 165px; height: 33px; line-height: 29px; margin-top: 1px; }
.r4 { height: 27px; }
.r5 { height: 46px; margin-top: -1px; }
.shadow { width: 128px; }
.options { height: 172px; padding-top: 19px; }
.options .row { height: 36px; }
.options .row:nth-child(2) { margin-top: 7px; }
.paper { height: 142px; padding-top: 19px; }
.select { width: 309px; height: 30px; margin-top: 9px; border: 1px solid #d6d8de; border-radius: 6px; background: #ededed; color: #000; display: flex; align-items: center; justify-content: space-between; padding: 0 6px 1px 9px; font: 17.500px "Liberation Sans", sans-serif; letter-spacing: 0; }
.select svg { width: 14px; height: 9px; }
.radios { display: flex; align-items: center; padding: 9px 0 0 14px; }
.radios label { padding-top: 8px; }
.radios input { margin-top: -1px; }
.portrait { width: 74px; }
.actions { height: 95px; padding-top: 18px; display: flex; flex-direction: column; gap: 3px; }
.actions .btn { width: 315px; height: 29px; }

/* task bar */
.taskbar { height: 60px; flex: none; display: flex; background: linear-gradient(90deg, #1c1c1c 0 45%, #231c1c 62%, #1f1f20 70%, #182229 76%, #1a222b 82%, #211c1c 87%, #1d1d1d); color: #fff; }
.start { width: 72px; padding: 18px 0 0 24px; }
.start svg { width: 24px; height: 24px; }
.search { width: 516px; border: 2px solid #bdbdbd; background: #f2f2f2; color: #2b2b2b; display: flex; align-items: center; padding-left: 16px; gap: 17px; font-size: 21.500px; letter-spacing: 0; padding-top: 2px; }
.search svg { width: 25px; height: 25px; margin-top: -4px; }
.apps { display: flex; margin-left: -3px; }
.apps > div { width: 75px; display: flex; align-items: center; justify-content: center; position: relative; }
.apps svg { width: 36px; height: 36px; }
.apps .tv { padding-right: 4px; }
.apps .run { padding-right: 2px; }
.apps .run::after { content: ""; position: absolute; left: 8px; bottom: 0; width: 61px; height: 3px; background: #76b9ed; }
.apps .cur { width: 73px; margin-left: 2px; background: #4b4a4a; border-bottom: 3px solid #76b9ed; padding-top: 3px; }
.badge { position: absolute; left: 34px; top: 27px; width: 23px; height: 24px; border-radius: 50%; background: #33691e; font-size: 13px; line-height: 24px; text-align: center; }
.tray { margin-left: auto; display: flex; align-items: center; }
.tray svg { fill: none; stroke: #fff; stroke-width: 1.500; height: 20px; }
.t1 { width: 18px; } .t2 { width: 24px; margin-left: 16px; } .t3 { width: 19px; margin-left: 15px; } .t4 { width: 23px; margin-left: 14px; } .t5 { width: 21px; margin-left: 20px; }
.clock { width: 114px; margin: 0 0 0 14px; display: flex; flex-direction: column; align-items: center; line-height: 28px; font-size: 17.500px; letter-spacing: -.2px; }
.notif { position: relative; width: 24px; margin-left: 18px; }
.tray .notif svg { width: 24px; height: 26px; }
.notif span { position: absolute; left: 12px; top: 12px; width: 24px; height: 24px; border: 1px solid #999; border-radius: 50%; background: #2b2b2b; font-size: 16px; font-weight: 600; line-height: 22px; text-align: center; }
.desk { width: 2px; height: 60px; background: #777; margin: 0 5px 0 31px; }
```
